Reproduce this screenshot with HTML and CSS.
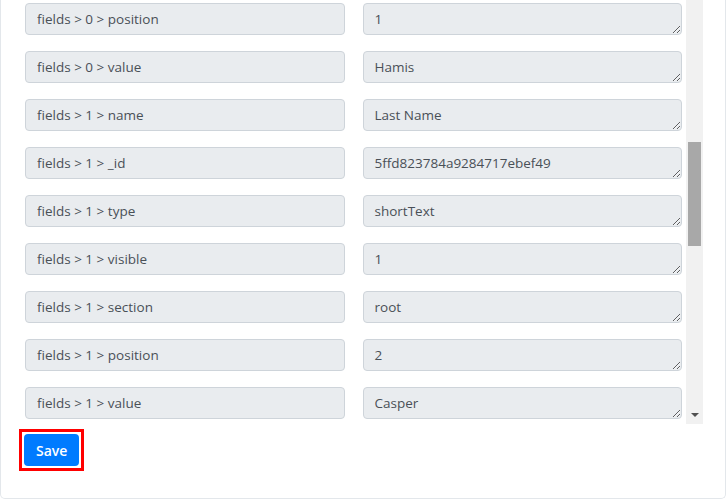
FILE: index.html
```html
<!DOCTYPE html>
<html lang="en">
<head>
  <meta charset="UTF-8">
  <meta name="viewport" content="width=device-width, initial-scale=1.0">
  <title>Field Mapping</title>
  <link rel="stylesheet" href="styles.css">
</head>
<body>
  <div class="card">
    <div class="list-wrap">
      <div class="fields" id="fields">
        <div class="field-row"><input class="field-key" value="_id" readonly><textarea class="field-value" rows="1">5ffd8237f2a9284717ebef12</textarea></div>
        <div class="field-row"><input class="field-key" value="form" readonly><textarea class="field-value" rows="1">5ffd823784a9284717ebef40</textarea></div>
        <div class="field-row"><input class="field-key" value="status" readonly><textarea class="field-value" rows="1">complete</textarea></div>
        <div class="field-row"><input class="field-key" value="submittedAt" readonly><textarea class="field-value" rows="1">2021-01-12T10:22:31.000Z</textarea></div>
        <div class="field-row"><input class="field-key" value="createdAt" readonly><textarea class="field-value" rows="1">2021-01-12T10:22:31.000Z</textarea></div>
        <div class="field-row"><input class="field-key" value="updatedAt" readonly><textarea class="field-value" rows="1">2021-01-12T10:22:31.000Z</textarea></div>
        <div class="field-row"><input class="field-key" value="ip" readonly><textarea class="field-value" rows="1">127.0.0.1</textarea></div>
        <div class="field-row"><input class="field-key" value="fields > 0 > name" readonly><textarea class="field-value" rows="1">First Name</textarea></div>
        <div class="field-row"><input class="field-key" value="fields > 0 > _id" readonly><textarea class="field-value" rows="1">5ffd823784a9284717ebef48</textarea></div>
        <div class="field-row"><input class="field-key" value="fields > 0 > type" readonly><textarea class="field-value" rows="1">shortText</textarea></div>
        <div class="field-row"><input class="field-key" value="fields > 0 > visible" readonly><textarea class="field-value" rows="1">1</textarea></div>
        <div class="field-row"><input class="field-key" value="fields > 0 > section" readonly><textarea class="field-value" rows="1">root</textarea></div>
        <div class="field-row"><input class="field-key" value="fields > 0 > position" readonly><textarea class="field-value" rows="1">1</textarea></div>
        <div class="field-row"><input class="field-key" value="fields > 0 > value" readonly><textarea class="field-value" rows="1">Hamis</textarea></div>
        <div class="field-row"><input class="field-key" value="fields > 1 > name" readonly><textarea class="field-value" rows="1">Last Name</textarea></div>
        <div class="field-row"><input class="field-key" value="fields > 1 > _id" readonly><textarea class="field-value" rows="1">5ffd823784a9284717ebef49</textarea></div>
        <div class="field-row"><input class="field-key" value="fields > 1 > type" readonly><textarea class="field-value" rows="1">shortText</textarea></div>
        <div class="field-row"><input class="field-key" value="fields > 1 > visible" readonly><textarea class="field-value" rows="1">1</textarea></div>
        <div class="field-row"><input class="field-key" value="fields > 1 > section" readonly><textarea class="field-value" rows="1">root</textarea></div>
        <div class="field-row"><input class="field-key" value="fields > 1 > position" readonly><textarea class="field-value" rows="1">2</textarea></div>
        <div class="field-row"><input class="field-key" value="fields > 1 > value" readonly><textarea class="field-value" rows="1">Casper</textarea></div>
        <div class="field-row"><input class="field-key" value="fields > 2 > name" readonly><textarea class="field-value" rows="1">Email</textarea></div>
        <div class="field-row"><input class="field-key" value="fields > 2 > _id" readonly><textarea class="field-value" rows="1">5ffd823784a9284717ebef4a</textarea></div>
        <div class="field-row"><input class="field-key" value="fields > 2 > type" readonly><textarea class="field-value" rows="1">email</textarea></div>
        <div class="field-row"><input class="field-key" value="fields > 2 > visible" readonly><textarea class="field-value" rows="1">1</textarea></div>
        <div class="field-row"><input class="field-key" value="fields > 2 > section" readonly><textarea class="field-value" rows="1">root</textarea></div>
        <div class="field-row"><input class="field-key" value="fields > 2 > position" readonly><textarea class="field-value" rows="1">3</textarea></div>
        <div class="field-row"><input class="field-key" value="fields > 2 > value" readonly><textarea class="field-value" rows="1">hamis@example.com</textarea></div>
      </div>
      <div class="scrollbar">
        <div class="scrollbar-thumb"></div>
        <div class="scrollbar-down"></div>
      </div>
    </div>
    <div class="actions">
      <div class="highlight">
        <button class="btn-save">Save</button>
      </div>
    </div>
  </div>

  <script>
    document.getElementById('fields').scrollTop = 579;
  </script>
</body>
</html>
```

FILE: styles.css
```css
body {
  margin: 0;
  font-family: "Open Sans", Arial, sans-serif;
  background-color: #fff;
}
.card {
  border: 1px solid #e3e7eb;
  border-top: 0;
  border-radius: 0 0 5px 5px;
  padding: 0 22px 27px 0;
}
.list-wrap {
  display: flex;
  height: 424px;
}
.fields {
  flex: 1;
  overflow: hidden;
  padding: 6px 4px 21px 24px;
  box-sizing: border-box;
}
.scrollbar {
  width: 17px;
  display: flex;
  flex-direction: column;
  background-color: #f1f1f1;
}
.scrollbar-thumb {
  margin: 142px 2px 0;
  height: 104px;
  background-color: #a8a8a8;
}
.scrollbar-down {
  margin: auto auto 7px;
  width: 0;
  height: 0;
  border-left: 4px solid transparent;
  border-right: 4px solid transparent;
  border-top: 4px solid #505050;
}
.field-row {
  display: grid;
  grid-template-columns: 1fr 1fr;
  gap: 18px;
  margin-bottom: 16px;
}
.field-key,
.field-value {
  height: 32px;
  box-sizing: border-box;
  margin: 0;
  padding: 5px 11px;
  font-family: inherit;
  font-size: 13.5px;
  line-height: 20px;
  color: #495057;
  background-color: #e9ecef;
  border: 1px solid #ced4da;
  border-radius: 4px;
  outline: none;
}
.field-value {
  resize: vertical;
  overflow: hidden;
  min-height: 32px;
}
.actions {
  margin: 5px 0 0 18px;
}
.highlight {
  display: inline-block;
  border: 3px solid #ff0000;
  padding: 2px;
}
.btn-save {
  display: block;
  height: 32px;
  padding: 0 12px;
  font-family: inherit;
  font-size: 14px;
  font-weight: 600;
  color: #fff;
  background-color: #007bff;
  border: 0;
  border-radius: 4px;
  cursor: pointer;
}
```
